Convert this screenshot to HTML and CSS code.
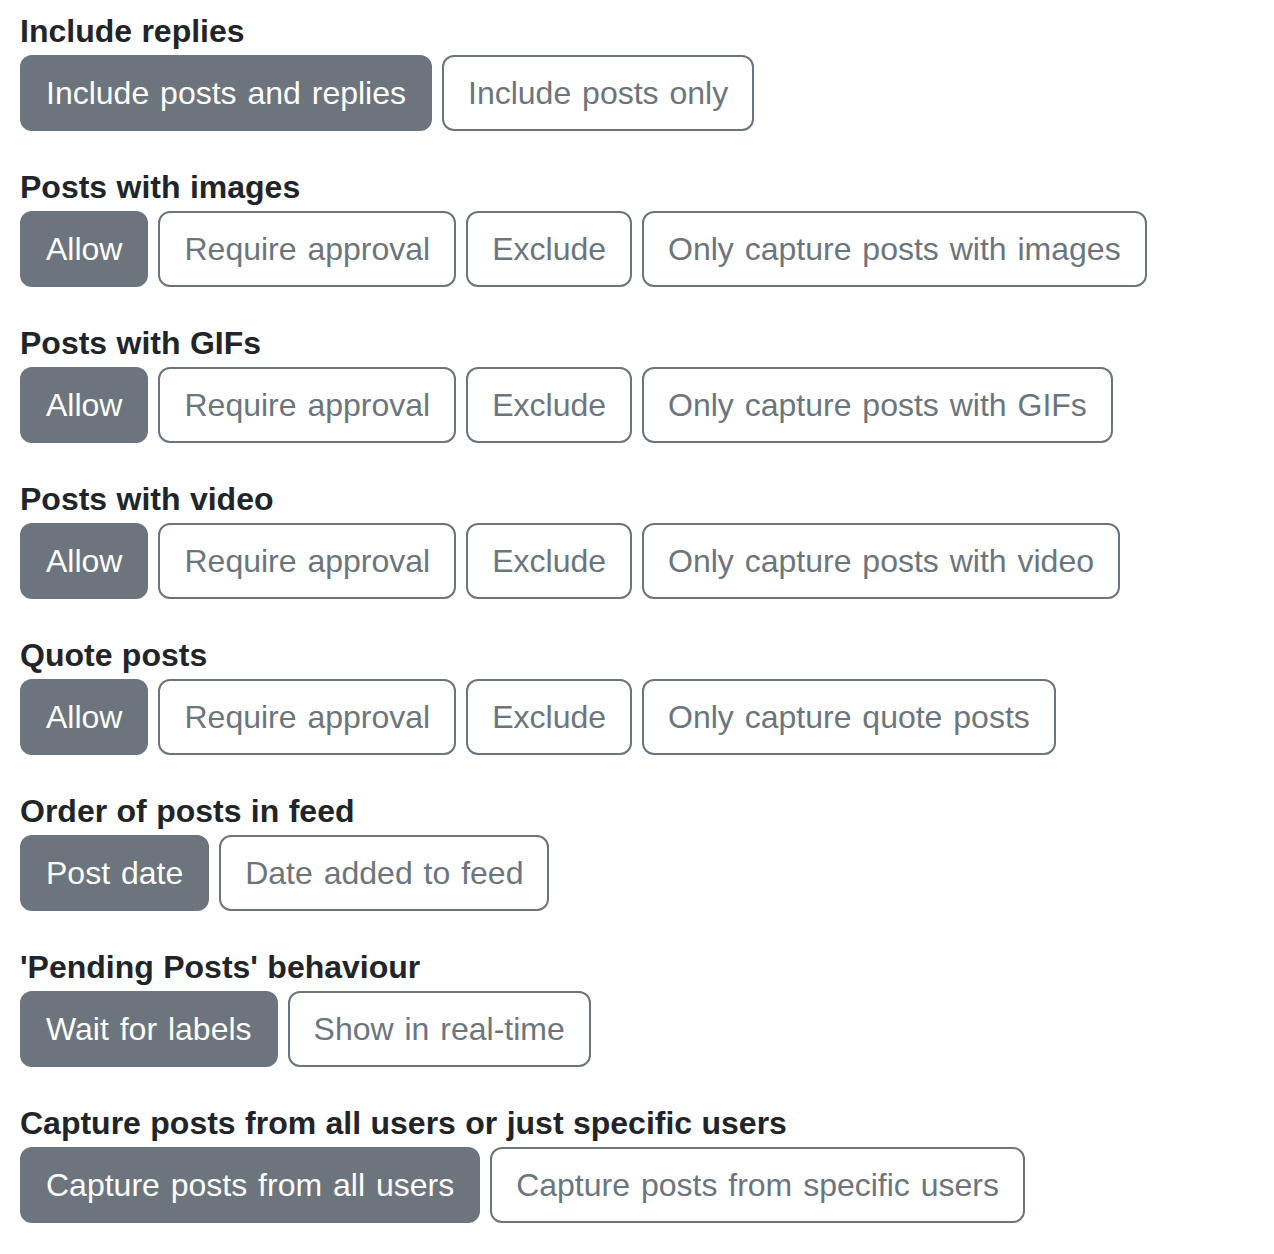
FILE: index.html
```html
<!DOCTYPE html>
<html lang="en">
<head>
<meta charset="utf-8">
<title>Feed settings</title>
<link rel="stylesheet" href="styles.css">
</head>
<body>
<div class="page">
  <div class="field">
    <div class="label">Include replies</div>
    <div class="group">
      <button class="btn active">Include posts and replies</button>
      <button class="btn">Include posts only</button>
    </div>
  </div>
  <div class="field">
    <div class="label">Posts with images</div>
    <div class="group">
      <button class="btn active">Allow</button>
      <button class="btn">Require approval</button>
      <button class="btn">Exclude</button>
      <button class="btn">Only capture posts with images</button>
    </div>
  </div>
  <div class="field">
    <div class="label">Posts with GIFs</div>
    <div class="group">
      <button class="btn active">Allow</button>
      <button class="btn">Require approval</button>
      <button class="btn">Exclude</button>
      <button class="btn">Only capture posts with GIFs</button>
    </div>
  </div>
  <div class="field">
    <div class="label">Posts with video</div>
    <div class="group">
      <button class="btn active">Allow</button>
      <button class="btn">Require approval</button>
      <button class="btn">Exclude</button>
      <button class="btn">Only capture posts with video</button>
    </div>
  </div>
  <div class="field">
    <div class="label">Quote posts</div>
    <div class="group">
      <button class="btn active">Allow</button>
      <button class="btn">Require approval</button>
      <button class="btn">Exclude</button>
      <button class="btn">Only capture quote posts</button>
    </div>
  </div>
  <div class="field">
    <div class="label">Order of posts in feed</div>
    <div class="group">
      <button class="btn active">Post date</button>
      <button class="btn">Date added to feed</button>
    </div>
  </div>
  <div class="field">
    <div class="label">'Pending Posts' behaviour</div>
    <div class="group">
      <button class="btn active">Wait for labels</button>
      <button class="btn">Show in real-time</button>
    </div>
  </div>
  <div class="field">
    <div class="label">Capture posts from all users or just specific users</div>
    <div class="group">
      <button class="btn active">Capture posts from all users</button>
      <button class="btn">Capture posts from specific users</button>
    </div>
  </div>
</div>
</body>
</html>
```

FILE: styles.css
```css
html, body {
  margin: 0;
  padding: 0;
  background: #ffffff;
}
body {
  font-family: "Liberation Sans", Arial, sans-serif;
  font-size: 32px;
  line-height: 48px;
  color: #212529;
}
.page {
  padding: 7px 20px;
  display: flex;
  flex-direction: column;
  gap: 32px;
}
.label {
  font-weight: 700;
  font-size: 32px;
  line-height: 48px;
  color: #212529;
  word-spacing: 0.5px;
}
.group {
  display: flex;
  gap: 10px;
}
.btn {
  font-family: inherit;
  font-size: 32px;
  line-height: 48px;
  padding: 12px 24px;
  border: 2px solid #6c757d;
  border-radius: 12px;
  background: #ffffff;
  color: #6c757d;
  white-space: nowrap;
  word-spacing: 2px;
  cursor: pointer;
}
.btn.active {
  background: #6c757d;
  color: #ffffff;
}
```
